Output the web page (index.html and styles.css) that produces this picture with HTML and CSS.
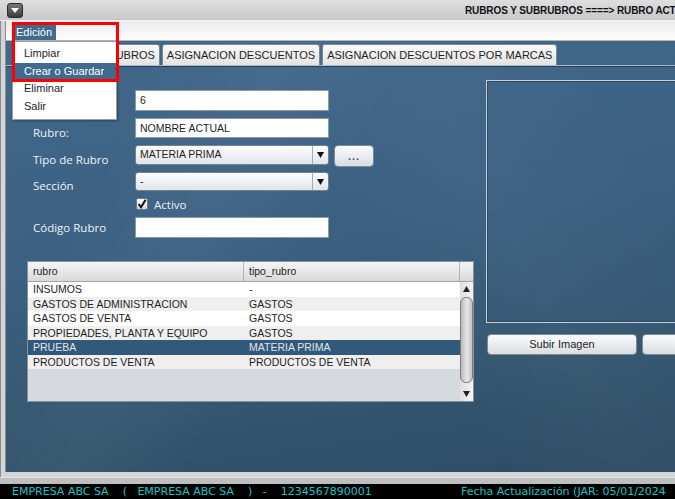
FILE: index.html
```html
<!DOCTYPE html>
<html lang="es">
<head>
    <meta charset="UTF-8">
    <meta name="viewport" content="width=device-width, initial-scale=1.0">
    <title>Rubros y Subrubros</title>
    <link rel="stylesheet" href="styles.css">
</head>
<body>

<div class="window">
    <div class="titlebar">
        <div class="sysbtn">
            <svg width="8" height="5" viewBox="0 0 8 5"><path d="M0 0H8L4 5Z" fill="#fff"/></svg>
        </div>
        <div class="title">RUBROS Y SUBRUBROS ====&gt; RUBRO ACTUAL</div>
    </div>

    <div class="frame">
        <div class="menubar">
            <span class="menu">Edición</span>
        </div>

        <div class="desk">
            <div class="tabs">
                <div class="tab">RUBROS Y SUBRUBROS</div>
                <div class="tab">ASIGNACION DESCUENTOS</div>
                <div class="tab">ASIGNACION DESCUENTOS POR MARCAS</div>
            </div>

            <div class="pane">
                <div class="left">
                    <div class="form">
                        <div></div>
                        <div class="field">6</div>
                        <div></div>

                        <label class="lbl">Rubro:</label>
                        <div class="field">NOMBRE ACTUAL</div>
                        <div></div>

                        <label class="lbl">Tipo de Rubro</label>
                        <div class="select">
                            <span>MATERIA PRIMA</span>
                            <div class="arrow"><svg width="7" height="6" viewBox="0 0 7 6"><path d="M0 0H7L3.5 6Z" fill="#111"/></svg></div>
                        </div>
                        <div class="dots">...</div>

                        <label class="lbl">Sección</label>
                        <div class="select">
                            <span>-</span>
                            <div class="arrow"><svg width="7" height="6" viewBox="0 0 7 6"><path d="M0 0H7L3.5 6Z" fill="#111"/></svg></div>
                        </div>
                        <div></div>

                        <div></div>
                        <div class="check">
                            <svg width="12" height="12" viewBox="0 0 12 12">
                                <defs><linearGradient id="cb" x1="0" y1="0" x2="0" y2="1"><stop offset="0" stop-color="#fdfdfd"/><stop offset="1" stop-color="#cfd4d9"/></linearGradient></defs>
                                <rect x="0.5" y="0.5" width="11" height="11" rx="1.5" fill="url(#cb)" stroke="#6f7a84"/>
                                <path d="M2.6 6.2L5 9.2L9.6 1.8" fill="none" stroke="#111" stroke-width="2"/>
                            </svg>
                            <span>Activo</span>
                        </div>
                        <div></div>

                        <label class="lbl mid">Código Rubro</label>
                        <div class="field"></div>
                        <div></div>
                    </div>

                    <div class="grid">
                        <div class="grid-head">
                            <div class="hc">rubro</div>
                            <div class="hc">tipo_rubro</div>
                            <div class="hc corner"></div>
                        </div>
                        <div class="grid-body">
                            <div class="rows">
                                <div class="row"><span>INSUMOS</span><span>-</span></div>
                                <div class="row"><span>GASTOS DE ADMINISTRACION</span><span>GASTOS</span></div>
                                <div class="row"><span>GASTOS DE VENTA</span><span>GASTOS</span></div>
                                <div class="row"><span>PROPIEDADES, PLANTA Y EQUIPO</span><span>GASTOS</span></div>
                                <div class="row sel"><span>PRUEBA</span><span>MATERIA PRIMA</span></div>
                                <div class="row"><span>PRODUCTOS DE VENTA</span><span>PRODUCTOS DE VENTA</span></div>
                            </div>
                            <div class="vscroll">
                                <div class="sb-arrow"><svg width="7" height="6" viewBox="0 0 7 6"><path d="M0 6H7L3.5 0Z" fill="#222"/></svg></div>
                                <div class="sb-thumb"></div>
                                <div class="sb-arrow"><svg width="7" height="6" viewBox="0 0 7 6"><path d="M0 0H7L3.5 6Z" fill="#222"/></svg></div>
                            </div>
                        </div>
                    </div>
                </div>

                <div class="side">
                    <div class="photo"></div>
                    <div class="side-btns">
                        <div class="btn">Subir Imagen</div>
                        <div class="btn"></div>
                    </div>
                </div>
            </div>
        </div>
    </div>

    <div class="statusgap"></div>
    <div class="status">
        <span>EMPRESA ABC SA    (   EMPRESA ABC SA    )   -    1234567890001</span>
        <span>Fecha Actualización (JAR: 05/01/2024</span>
    </div>

    <div class="dropdown">
        <div class="item">Limpiar</div>
        <div class="item on">Crear o Guardar</div>
        <div class="item">Eliminar</div>
        <div class="item">Salir</div>
    </div>
    <div class="mark"></div>
</div>

</body>
</html>
```

FILE: styles.css
```css
* {
    box-sizing: border-box;
}
body {
    margin: 0;
    width: 675px;
    height: 499px;
    overflow: hidden;
    font-family: "Liberation Sans", Arial, sans-serif;
    font-size: 11px;
    color: #1e1e1e;
    background: #cfcfcf;
}
.window {
    position: relative;
    width: 675px;
    height: 499px;
    display: flex;
    flex-direction: column;
    overflow: hidden;
}

/* title bar */
.titlebar {
    height: 21px;
    flex: none;
    display: flex;
    align-items: center;
    padding-left: 7px;
    background: linear-gradient(#dedede, #c8c8c8);
    border-bottom: 1px solid #f2f2f2;
}
.sysbtn {
    width: 16px;
    height: 15px;
    border-radius: 3px;
    border: 1px solid #2b2b2b;
    background: linear-gradient(#777, #3c3c3c);
    display: flex;
    align-items: center;
    justify-content: center;
}
.title {
    flex: 1;
    min-width: 0;
    padding-left: 442px;
    white-space: nowrap;
    overflow: hidden;
    font-weight: bold;
    font-size: 10px;
    letter-spacing: -0.1px;
    color: #111;
}

/* window frame */
.frame {
    flex: 1;
    display: flex;
    flex-direction: column;
    border-left: 1px solid #8a8a8a;
    padding: 0 0 5px 4px;
    background: #d3d6d9;
}
.menubar {
    height: 20px;
    flex: none;
    padding: 3px 0 0 8px;
    border-left: 1px solid #8e8e8e;
    border-bottom: 1px solid #b5b5b5;
    background: linear-gradient(#ececec, #fdfdfd);
}
.menu {
    display: inline-block;
    height: 16px;
    line-height: 16px;
    padding: 0 4px 0 2px;
    background: #3f6b8f;
    color: #fff;
}
.desk {
    flex: 1;
    display: flex;
    flex-direction: column;
    border-left: 1px solid #8e8e8e;
    background:
        linear-gradient(118deg, rgba(255,255,255,0) 18%, rgba(255,255,255,0.035) 32%, rgba(255,255,255,0) 46%),
        linear-gradient(62deg, rgba(0,0,0,0) 55%, rgba(255,255,255,0.025) 70%, rgba(0,0,0,0) 90%),
        linear-gradient(172deg, #42688b 0%, #3b6081 45%, #34566f 75%, #2e4b64 100%);
}

/* tabs */
.tabs {
    height: 24px;
    flex: none;
    display: flex;
    align-items: flex-end;
    gap: 2px;
    padding-left: 14px;
}
.tab {
    height: 21px;
    line-height: 20px;
    padding: 0 4px;
    white-space: nowrap;
    border: 1px solid #7d8893;
    border-bottom: none;
    border-radius: 3px 3px 0 0;
    background: linear-gradient(#fafafa, #e3e3e3);
}

.pane {
    flex: 1;
    display: flex;
    border-top: 1px solid #a9bccc;
    box-shadow: inset 0 1px 0 #25425c;
}
.left {
    width: 480px;
    flex: none;
    padding: 24px 0 0 21px;
}

/* form */
.form {
    display: grid;
    grid-template-columns: 108px 194px 45px;
    grid-template-rows: 21px 20px 20px 19px 12px 21px;
    row-gap: 7px;
}
.lbl {
    align-self: end;
    margin-bottom: -2px;
    padding-left: 6px;
    font-family: "Open Sans", sans-serif;
    font-size: 11.5px;
    line-height: 14px;
    color: #eef2f6;
}
.lbl.mid {
    align-self: center;
    margin-bottom: 0;
}
.field {
    background: #fff;
    border: 1px solid #8d9aa6;
    padding: 0 4px;
    line-height: 19px;
    font-size: 10.5px;
}
.select {
    display: flex;
    border: 1px solid #75828f;
    border-radius: 3px;
    background: linear-gradient(#fdfdfd, #e1e4e8);
    font-size: 10.5px;
}
.select span {
    flex: 1;
    padding-left: 4px;
    line-height: 17px;
}
.select .arrow {
    width: 16px;
    border-left: 1px solid #a3adb6;
    display: flex;
    align-items: center;
    justify-content: center;
}
.dots {
    align-self: start;
    margin-left: 5px;
    width: 40px;
    height: 22px;
    border: 1px solid #7f8a95;
    border-radius: 4px;
    background: linear-gradient(#fbfbfb, #dadde1);
    text-align: center;
    line-height: 20px;
    font-weight: bold;
    color: #3a5a80;
    letter-spacing: 1px;
}
.check {
    display: flex;
    align-items: center;
    gap: 6px;
    padding-left: 1px;
    font-family: "Open Sans", sans-serif;
    font-size: 11.5px;
    color: #eef2f6;
}

/* table */
.grid {
    margin-top: 23px;
    width: 447px;
    height: 141px;
    border: 1px solid #8593a1;
    background: #d6dade;
    display: flex;
    flex-direction: column;
    font-size: 10.5px;
}
.grid-head {
    height: 20px;
    flex: none;
    display: flex;
    border-bottom: 1px solid #9ea5ac;
    background: linear-gradient(#f5f5f5, #d9d9d9);
}
.hc {
    width: 216px;
    padding-left: 5px;
    line-height: 19px;
    border-right: 1px solid #b2b2b2;
}
.hc.corner {
    width: 13px;
    border-right: none;
}
.grid-body {
    flex: 1;
    display: flex;
}
.rows {
    flex: 1;
}
.row {
    display: flex;
    height: 14.5px;
    line-height: 14.5px;
    background: #fff;
}
.row:nth-child(2n) {
    background: #efefef;
}
.row span {
    width: 216px;
    padding-left: 5px;
    white-space: nowrap;
}
.row.sel {
    background: #33597a;
    color: #dfe7ee;
}
.vscroll {
    width: 13px;
    display: flex;
    flex-direction: column;
    background: linear-gradient(90deg, #dedede, #f3f3f3);
}
.sb-arrow {
    height: 14px;
    display: flex;
    align-items: center;
    justify-content: center;
}
.sb-thumb {
    flex: 1;
    margin: 1px 0 4px;
    border-radius: 6px;
    border: 1px solid #7e7e7e;
    background: linear-gradient(90deg, #b9b9b9, #e6e6e6 55%, #c2c2c2);
}

/* image side */
.side {
    flex: 1;
    min-width: 0;
    padding-top: 14px;
}
.photo {
    width: 200px;
    height: 243px;
    border: 1px solid #c6d0da;
    box-shadow: inset 0 0 0 1px #2d4b66;
}
.side-btns {
    display: flex;
    gap: 5px;
    margin: 11px 0 0 1px;
}
.btn {
    flex: none;
    width: 150px;
    height: 21px;
    line-height: 19px;
    text-align: center;
    border: 1px solid #7f8a95;
    border-radius: 4px;
    background: linear-gradient(#fbfbfb, #dadde1);
    color: #1e1e1e;
}

/* status */
.statusgap {
    height: 7px;
    flex: none;
    background: #bdbfc1;
    border-top: 1px solid #e4e4e4;
}
.status {
    height: 15px;
    flex: none;
    display: grid;
    grid-template-columns: 449px auto;
    padding-left: 12px;
    background: #000;
    color: #22c3c6;
    font-family: "DejaVu Sans", sans-serif;
    font-size: 11px;
    line-height: 15px;
    white-space: pre;
    overflow: hidden;
}

/* open menu */
.dropdown {
    position: absolute;
    left: 12px;
    top: 41px;
    width: 105px;
    height: 79px;
    padding-top: 3px;
    background: #fff;
    border: 1px solid #9c9c9c;
    box-shadow: 1px 1px 2px rgba(0, 0, 0, 0.3);
}
.item {
    height: 17.5px;
    line-height: 17.5px;
    padding-left: 11px;
}
.item.on {
    background: #3f6b8f;
    color: #fff;
}
.mark {
    position: absolute;
    left: 12px;
    top: 22px;
    width: 107px;
    height: 60px;
    border: 3px solid #f00;
}
```
